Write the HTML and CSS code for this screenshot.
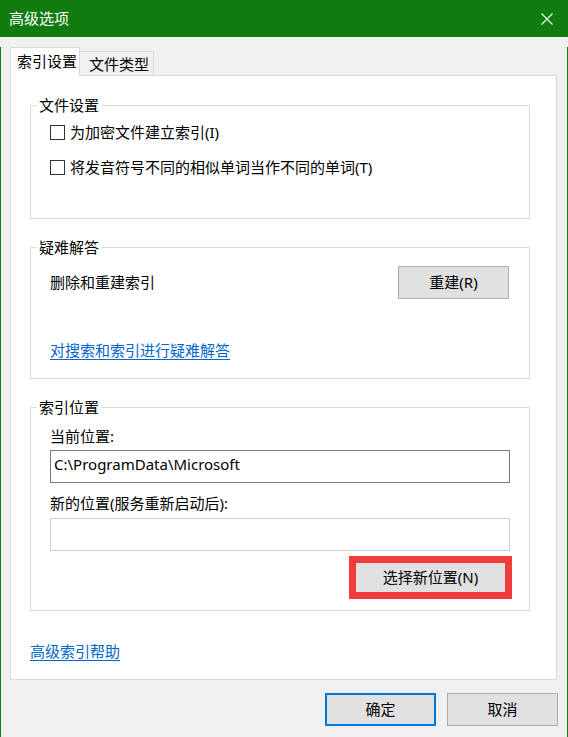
FILE: index.html
```html
<!DOCTYPE html>
<html lang="zh-CN">
<head>
<meta charset="utf-8">
<title>高级选项</title>
<link rel="stylesheet" href="styles.css">
</head>
<body>
<div class="window">
  <div class="titlebar">
    <span class="title">高级选项</span>
    <svg class="close" width="12" height="12" viewBox="0 0 12 12"><path d="M0.5 0.5 L11.5 11.5 M11.5 0.5 L0.5 11.5" stroke="#fff" stroke-width="1.1" fill="none"/></svg>
  </div>
  <div class="client">
    <div class="tabs">
      <div class="tab active">索引设置</div>
      <div class="tab">文件类型</div>
    </div>
    <div class="panel">
      <div class="group g1">
        <div class="legend">文件设置</div>
        <div class="check c1"><span class="box"></span><span>为加密文件建立索引(I)</span></div>
        <div class="check c2"><span class="box"></span><span>将发音符号不同的相似单词当作不同的单词(T)</span></div>
      </div>
      <div class="group g2">
        <div class="legend">疑难解答</div>
        <div class="row">
          <span class="label">删除和重建索引</span>
          <button class="btn rebuild">重建(R)</button>
        </div>
        <a class="link trouble" href="#">对搜索和索引进行疑难解答</a>
      </div>
      <div class="group g3">
        <div class="legend">索引位置</div>
        <div class="label cur">当前位置:</div>
        <div class="field">C:\ProgramData\Microsoft</div>
        <div class="label next">新的位置(服务重新启动后):</div>
        <div class="field empty"></div>
        <div class="highlight"><button class="btn choose">选择新位置(N)</button></div>
      </div>
      <a class="link help" href="#">高级索引帮助</a>
    </div>
    <div class="actions">
      <button class="btn footer primary">确定</button>
      <button class="btn footer">取消</button>
    </div>
  </div>
</div>
</body>
</html>
```
FILE: styles.css
```css
* { box-sizing: border-box; }
html, body { margin: 0; padding: 0; }
body {
  width: 568px;
  height: 737px;
  font-family: "Noto Sans", "Noto Sans CJK SC", sans-serif;
  font-size: 15px;
  color: #000;
  background: #f0f0f0;
}
.window { width: 568px; height: 737px; }
.titlebar {
  height: 37px;
  background: #107c10;
  display: flex;
  align-items: center;
  justify-content: space-between;
  padding: 0 15px 0 9px;
}
.title { color: #fff; font-size: 15px; line-height: 20px; margin-top: -1px; }
.close { display: block; margin-top: 1px; }
.client {
  height: 700px;
  border: 1px solid #107c10;
  border-top: none;
  background: #f0f0f0;
}
.tabs {
  display: flex;
  align-items: flex-end;
  margin: 10px 0 0 9px;
  height: 29px;
  position: relative;
  z-index: 2;
}
.tab {
  line-height: 22px;
  border: 1px solid #d9d9d9;
  border-bottom: none;
  white-space: nowrap;
}
.tab.active {
  height: 29px;
  background: #fff;
  padding: 2px 2px 0 6px;
}
.tab:not(.active) {
  height: 24px;
  margin-bottom: 1px;
  border-left: none;
  padding: 1px 4px 0 9px;
  background: #f0f0f0;
}
.panel {
  height: 605px;
  margin: -1px 10px 0 9px;
  background: #fff;
  border: 1px solid #d9d9d9;
  padding: 0 0 0 19px;
  display: flex;
  flex-direction: column;
  align-items: flex-start;
  position: relative;
  z-index: 1;
}
.group {
  width: 500px;
  border: 1px solid #dcdcdc;
  padding: 0 19px;
  display: flex;
  flex-direction: column;
}
.g1 { margin-top: 29px; height: 114px; }
.g2 { margin-top: 28px; height: 132px; }
.g3 { margin-top: 28px; height: 204px; }
.legend {
  align-self: flex-start;
  margin: -11px 0 0 -13px;
  padding: 0 2px;
  line-height: 20px;
  height: 20px;
  background: #fff;
}
.check {
  display: flex;
  align-items: center;
  line-height: 20px;
  height: 20px;
}
.c1 { margin-top: 7px; }
.c2 { margin-top: 15px; }
.box {
  width: 15px;
  height: 15px;
  border: 1px solid #333;
  background: #fff;
  margin-right: 5px;
  flex: none;
}
.row {
  margin-top: 9px;
  display: flex;
  align-items: center;
  justify-content: space-between;
}
.label { line-height: 20px; }
.row .label { margin-top: -2px; }
.btn {
  font: inherit;
  color: #000;
  background: #e1e1e1;
  border: 1px solid #adadad;
  padding: 0 0 2px;
  height: 33px;
  line-height: 20px;
  border-radius: 0;
}
.rebuild { width: 111px; margin-right: 1px; }
.link {
  color: #0066cc;
  text-decoration: underline;
  text-underline-offset: 3px;
  line-height: 20px;
  display: block;
}
.trouble { margin-top: 41px; align-self: flex-start; }
.cur { margin-top: 9px; }
.field {
  margin-top: 4px;
  height: 33px;
  border: 1px solid #7a7a7a;
  background: #fff;
  padding: 0 3px;
  line-height: 26px;
}
.next { margin-top: 10px; }
.field.empty { margin-top: 5px; border-color: #cfcfcf; }
.highlight {
  align-self: flex-end;
  margin: 5px -2px 0 0;
  border: 7px solid #f03c3c;
}
.choose {
  display: block;
  width: 149px;
  height: 29px;
  border: none;
  line-height: 20px;
  padding: 0 0 2px;
}
.help { margin-top: 30px; }
.actions {
  display: flex;
  justify-content: flex-end;
  gap: 11px;
  margin: 13px 9px 0 0;
}
.footer { width: 111px; height: 33px; }
.primary { border: 2px solid #0078d7; }
```
